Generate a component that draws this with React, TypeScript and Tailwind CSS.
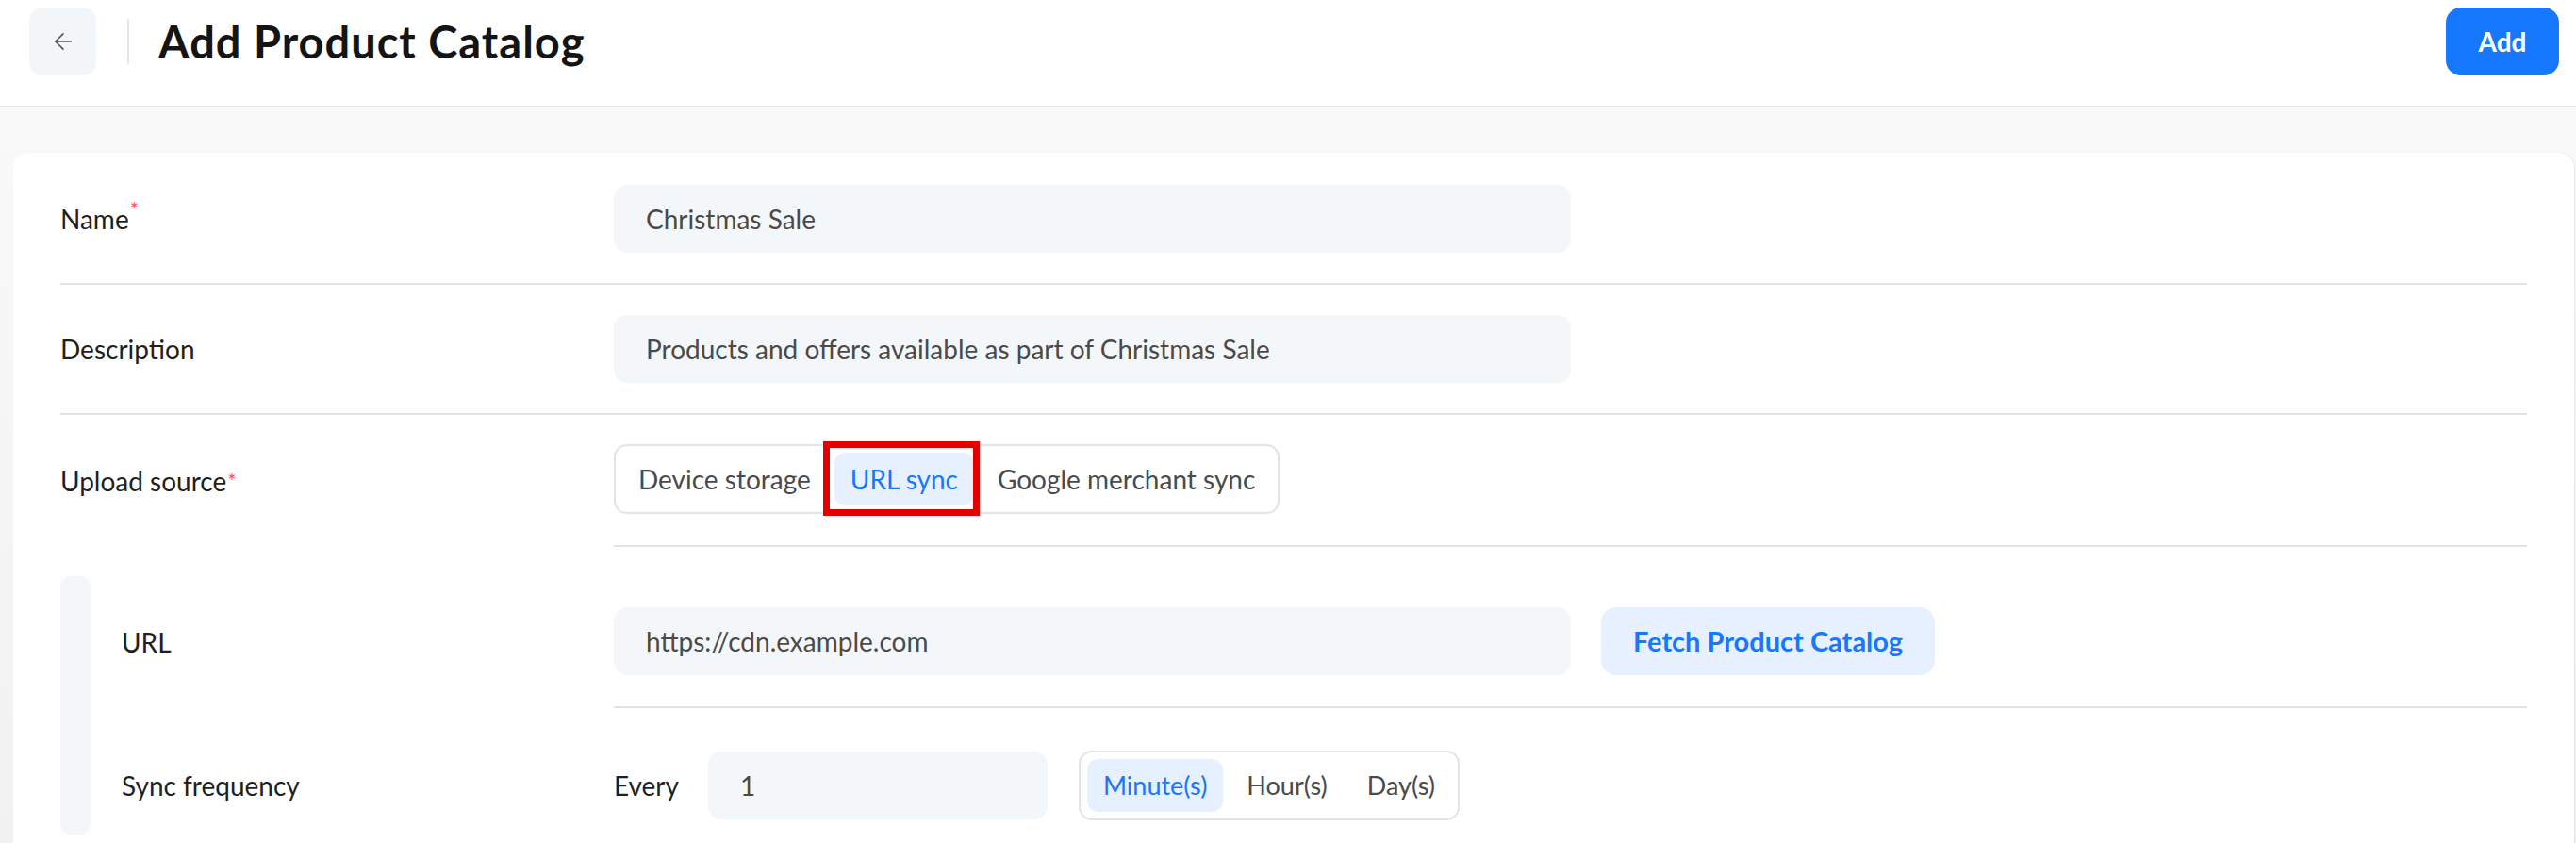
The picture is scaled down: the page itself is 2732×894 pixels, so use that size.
import React, { useState } from 'react';
import { ArrowLeft } from 'lucide-react';

type Option = { value: string; label: string };

const SOURCES: Option[] = [
    { value: 'device', label: 'Device storage' },
    { value: 'url', label: 'URL sync' },
    { value: 'google', label: 'Google merchant sync' },
];

const UNITS: Option[] = [
    { value: 'minute', label: 'Minute(s)' },
    { value: 'hour', label: 'Hour(s)' },
    { value: 'day', label: 'Day(s)' },
];

const Required = () => <span className="text-[#ff4d4f] text-[22px] align-top leading-none ml-[1px]">*</span>;

const Field: React.FC<{ value: string; className?: string }> = ({ value, className = 'w-[1015px]' }) => (
    <div className={`h-[72px] rounded-[14px] bg-[#f4f7fa] px-[34px] flex items-center text-[28px] text-[#4a4a4a] ${className}`}>
        {value}
    </div>
);

const Segmented: React.FC<{ options: Option[]; value: string; onChange: (v: string) => void; highlight?: string; size?: string }> = ({ options, value, onChange, highlight, size = 'text-[28px]' }) => (
    <div className="inline-flex items-center gap-[8px] p-[7px] border-2 border-[#e1e5e5] rounded-[14px] bg-white">
        {options.map(o => {
            const active = o.value === value;
            return (
                <button
                    key={o.value}
                    onClick={() => onChange(o.value)}
                    className={`relative h-[56px] px-[17px] rounded-[12px] ${size} ${active ? 'bg-[#e6f0ff] text-[#1677ff]' : 'text-[#4a4a4a]'}`}
                >
                    {o.label}
                    {highlight === o.value && (
                        <span className="absolute -left-[12px] -top-[12px] -right-[6px] -bottom-[11px] border-[7px] border-[#e50000] pointer-events-none" />
                    )}
                </button>
            );
        })}
    </div>
);

export default function App() {
    const [source, setSource] = useState('url');
    const [unit, setUnit] = useState('minute');

    return (
        <div className="min-h-screen bg-gradient-to-b from-[#fafafa] to-[#f1f1f1] font-['Lato','Liberation_Sans',sans-serif] text-[#1f1f1f]">
            {/* Top bar */}
            <header className="h-[114px] bg-white border-b-2 border-[#dfe3e3] flex items-start justify-between pl-[31px] pr-[18px] pt-[8px]">
                <div className="flex items-center">
                    <button className="w-[71px] h-[72px] rounded-[14px] bg-[#f3f6f9] flex items-center justify-center text-[#555]">
                        <ArrowLeft size={28} strokeWidth={1.4} />
                    </button>
                    <div className="w-[2px] h-[48px] bg-[#e6e6e6] ml-[33px]" />
                    <h1 className="ml-[31px] text-[47px] font-bold tracking-[1px] text-[#141414] leading-none">Add Product Catalog</h1>
                </div>
                <button className="w-[120px] h-[72px] rounded-[16px] bg-[#1677ff] text-white text-[28px] font-bold">Add</button>
            </header>

            <div className="pt-[48px]">
                <div className="ml-[14px] mr-[2px] rounded-t-[16px] bg-white px-[50px] pt-[2px] pb-[40px] shadow-[1px_0_2px_rgba(0,0,0,0.06)]">
                    {/* Name */}
                    <div className="flex items-center py-[32px] border-b-2 border-[#e1e5e5]">
                        <div className="w-[587px] text-[28px]">Name<Required /></div>
                        <Field value="Christmas Sale" />
                    </div>

                    {/* Description */}
                    <div className="flex items-center py-[32px] border-b-2 border-[#e1e5e5]">
                        <div className="w-[587px] text-[28px]">Description</div>
                        <Field value="Products and offers available as part of Christmas Sale" />
                    </div>

                    {/* Upload source */}
                    <div className="flex items-stretch">
                        <div className="w-[587px] text-[28px] flex items-center">Upload source<Required /></div>
                        <div className="flex-1 pt-[31px] pb-[33px] border-b-2 border-[#e1e5e5]">
                            <Segmented options={SOURCES} value={source} onChange={setSource} highlight="url" />
                        </div>
                    </div>

                    {/* URL sync settings */}
                    <div className="flex pt-[31px]">
                        <div className="w-[32px] rounded-[10px] bg-[#f4f7fa]" />
                        <div className="flex-1 pl-[33px]">
                            <div className="flex items-stretch">
                                <div className="w-[522px] text-[28px] flex items-center">URL</div>
                                <div className="flex-1 py-[33px] border-b-2 border-[#e1e5e5] flex items-center gap-[32px]">
                                    <Field value="https://cdn.example.com" />
                                    <button className="h-[72px] px-[34px] rounded-[16px] bg-[#e6f0ff] text-[#1677ff] text-[29px] font-bold">
                                        Fetch Product Catalog
                                    </button>
                                </div>
                            </div>
                            <div className="flex items-stretch">
                                <div className="w-[522px] text-[28px] flex items-center pt-[30px]">Sync frequency</div>
                                <div className="flex-1 pt-[45px] pb-[15px] flex items-center">
                                    <span className="text-[28px] w-[100px]">Every</span>
                                    <Field value="1" className="w-[360px]" />
                                    <div className="ml-[33px]">
                                        <Segmented options={UNITS} value={unit} onChange={setUnit} size="text-[27px]" />
                                    </div>
                                </div>
                            </div>
                        </div>
                    </div>
                </div>
            </div>
        </div>
    );
}
